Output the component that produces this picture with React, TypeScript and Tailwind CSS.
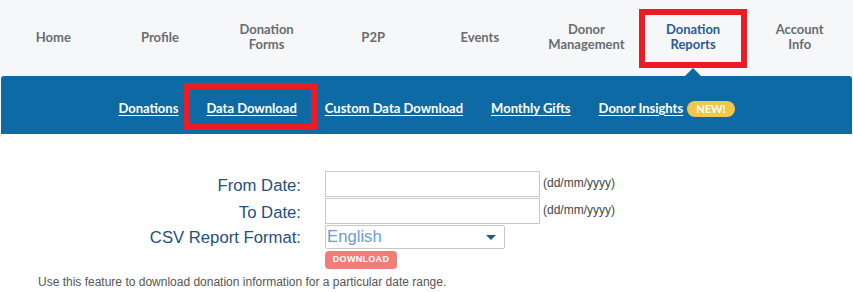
import React from "react";

const NAV = [
  { label: ["Home"] },
  { label: ["Profile"] },
  { label: ["Donation", "Forms"] },
  { label: ["P2P"] },
  { label: ["Events"] },
  { label: ["Donor", "Management"] },
  { label: ["Donation", "Reports"], active: true },
  { label: ["Account", "Info"] },
];

const SUB = ["Donations", "Data Download", "Custom Data Download", "Monthly Gifts", "Donor Insights"];

export default function App() {
  return (
    <div className="relative h-[292px] w-[853px] overflow-hidden bg-white">
      {/* top nav */}
      <div className="bg-[#f6f7f9]">
        <nav className="flex h-[76px] items-center pb-[2px] font-['Lato',sans-serif] text-[13px] font-bold leading-[15px]">
          {NAV.map((n, i) => (
            <div key={i} className="relative flex h-full flex-1 flex-col items-center justify-center text-center">
              {n.label.map((l) => (
                <span key={l} className={n.active ? "text-[#2a5a9c]" : "text-[#6a6c70]"}>
                  {l}
                </span>
              ))}
              {n.active && (
                <>
                  <div className="absolute bottom-[-2px] left-1/2 h-0 w-0 -translate-x-1/2 border-x-[8px] border-b-[8px] border-x-transparent border-b-[#0e6aa5]" />
                  <div className="absolute left-[-1px] top-[9px] h-[59px] w-[108px] border-[6px] border-[#ed1c24]" />
                </>
              )}
            </div>
          ))}
        </nav>

        {/* sub nav */}
        <div className="mx-px flex h-[58px] items-center justify-center gap-[28px] rounded-t-[3px] bg-[#0e6aa5] pt-[7px] font-['Lato',sans-serif] text-[13px] font-bold text-white">
          {SUB.map((s) => (
            <div key={s} className="relative flex h-[18px] items-center">
              <span className="underline underline-offset-2">{s}</span>
              {s === "Data Download" && (
                <div className="absolute left-[-22px] right-[-20px] top-[-17px] h-[47px] border-[6px] border-[#ed1c24]" />
              )}
              {s === "Donor Insights" && (
                <span className="ml-[4px] rounded-full bg-[#efc84a] px-[9px] py-[1px] text-[11px] leading-[14px] text-white">
                  NEW!
                </span>
              )}
            </div>
          ))}
        </div>
      </div>

      {/* form */}
      <div className="bg-white pt-[37px] font-['Liberation_Sans',Arial,sans-serif]">
        <div className="flex flex-col gap-px">
          <div className="flex h-[26px] items-center">
            <label className="w-[301px] pt-[4px] text-right text-[16.7px] text-[#1f4f7f]">From Date:</label>
            <input className="ml-[24px] h-[26px] w-[215px] border border-[#c8c8c8] bg-white outline-none" />
            <span className="ml-[3px] self-start pt-[3px] text-[12px] text-[#444]">(dd/mm/yyyy)</span>
          </div>
          <div className="flex h-[26px] items-center">
            <label className="w-[301px] pt-[4px] text-right text-[16.7px] text-[#1f4f7f]">To Date:</label>
            <input className="ml-[24px] h-[26px] w-[215px] border border-[#c8c8c8] bg-white outline-none" />
            <span className="ml-[3px] self-start pt-[3px] text-[12px] text-[#444]">(dd/mm/yyyy)</span>
          </div>
          <div className="flex h-[24px] items-center">
            <label className="w-[301px] pt-[2px] text-right text-[16.7px] text-[#1f4f7f]">CSV Report Format:</label>
            <div className="ml-[24px] flex h-[24px] w-[180px] items-center justify-between rounded-[2px] border border-[#c8c8c8] bg-white pl-[1px] pr-[8px]">
              <span className="text-[16.7px] text-[#6b9bd8]">English</span>
              <span className="h-0 w-0 border-x-[5px] border-t-[5px] border-x-transparent border-t-[#1f5a8f]" />
            </div>
          </div>
        </div>
        <div className="ml-[325px] mt-[2px] flex h-[18px] w-[72px] items-center justify-center rounded-[4px] bg-[#f07e78] text-[9px] font-bold tracking-[0.3px] text-white">
          DOWNLOAD
        </div>
        <p className="ml-[38px] mt-[4px] text-[12px] text-[#555]">
          Use this feature to download donation information for a particular date range.
        </p>
      </div>
    </div>
  );
}
